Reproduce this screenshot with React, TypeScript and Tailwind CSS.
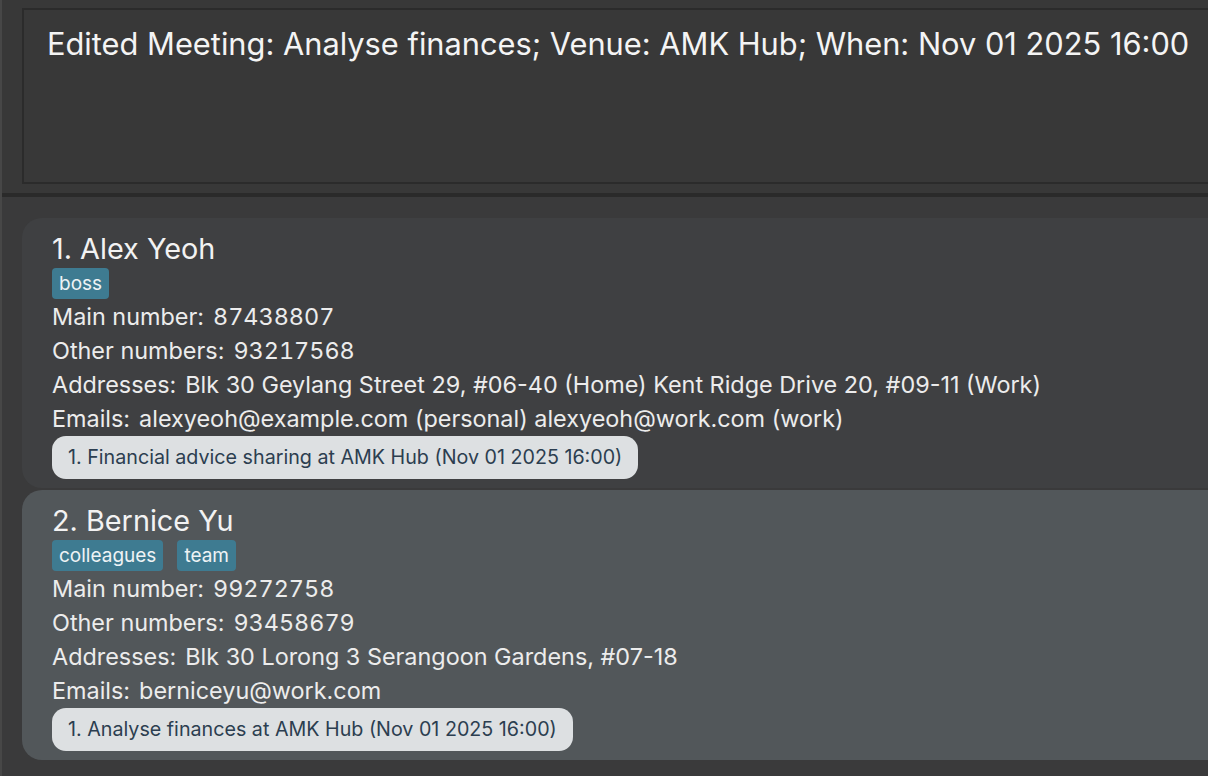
import React from "react";

type Person = {
  name: string;
  tags: string[];
  main: string;
  other: string;
  addresses: string;
  emails: string;
  meeting: string;
};

const PEOPLE: Person[] = [
  {
    name: "1. Alex Yeoh",
    tags: ["boss"],
    main: "87438807",
    other: "93217568",
    addresses: "Blk 30 Geylang Street 29, #06-40 (Home) Kent Ridge Drive 20, #09-11 (Work)",
    emails: "alexyeoh@example.com (personal) alexyeoh@work.com (work)",
    meeting: "1. Financial advice sharing at AMK Hub (Nov 01 2025 16:00)",
  },
  {
    name: "2. Bernice Yu",
    tags: ["colleagues", "team"],
    main: "99272758",
    other: "93458679",
    addresses: "Blk 30 Lorong 3 Serangoon Gardens, #07-18",
    emails: "berniceyu@work.com",
    meeting: "1. Analyse finances at AMK Hub (Nov 01 2025 16:00)",
  },
];

function Row({ label, value, num }: { label: string; value: string; num?: boolean }) {
  return (
    <div className="flex h-[34px] items-center gap-[9px] whitespace-nowrap text-[23.4px] text-[#ececec]">
      <span>{label}</span>
      <span className={num ? "tabular-nums" : ""}>{value}</span>
    </div>
  );
}

function PersonCard({ p, odd }: { p: Person; odd: boolean }) {
  return (
    <div
      className={`rounded-l-[20px] pl-[30px] pt-[12px] pb-[9px] ${
        odd ? "bg-[#3f4042]" : "bg-[#52575a]"
      }`}
    >
      <div className="h-[38px] whitespace-nowrap text-[28.8px] leading-[38px] text-[#f2f2f2]">
        {p.name}
      </div>
      <div className="flex h-[31px] gap-[14px]">
        {p.tags.map((t) => (
          <span
            key={t}
            className="rounded-[4px] bg-[#3e7b91] px-[7px] text-[19px] leading-[31px] text-[#eef3f5]"
          >
            {t}
          </span>
        ))}
      </div>
      <div className="mt-[1px]">
        <Row label="Main number:" value={p.main} num />
        <Row label="Other numbers:" value={p.other} num />
        <Row label="Addresses:" value={p.addresses} />
        <Row label="Emails:" value={p.emails} />
      </div>
      <div className="flex">
        <span className="h-[43px] whitespace-nowrap rounded-[14px] bg-[#dde0e2] px-[16px] text-[19.7px] leading-[43px] text-[#2c3e50]">
          {p.meeting}
        </span>
      </div>
    </div>
  );
}

export default function App() {
  return (
    <div
      className="flex h-[776px] w-[1208px] overflow-hidden bg-[#383838]"
      style={{ fontFamily: "Inter, 'Noto Sans', sans-serif" }}
    >
      <div className="w-[2px] shrink-0 bg-[#474747]" />
      <div className="flex min-w-0 flex-1 flex-col">
        <div className="h-[193px] shrink-0 pl-[20px] pt-[8px]">
          <div className="h-[176px] border-2 border-r-0 border-[#2b2b2b] pl-[23px] pt-[14px]">
            <div className="whitespace-nowrap text-[30.8px] leading-[40px] text-[#f4f4f4]">
              Edited Meeting: Analyse finances; Venue: AMK Hub; When: Nov 01 2025 16:00
            </div>
          </div>
        </div>
        <div className="h-[4px] shrink-0 bg-[#2a2a2a]" />
        <div className="flex flex-1 flex-col gap-[2px] bg-[#3a3a3b] pl-[20px] pt-[21px]">
          {PEOPLE.map((p, i) => (
            <PersonCard key={p.name} p={p} odd={i % 2 === 0} />
          ))}
        </div>
      </div>
    </div>
  );
}
